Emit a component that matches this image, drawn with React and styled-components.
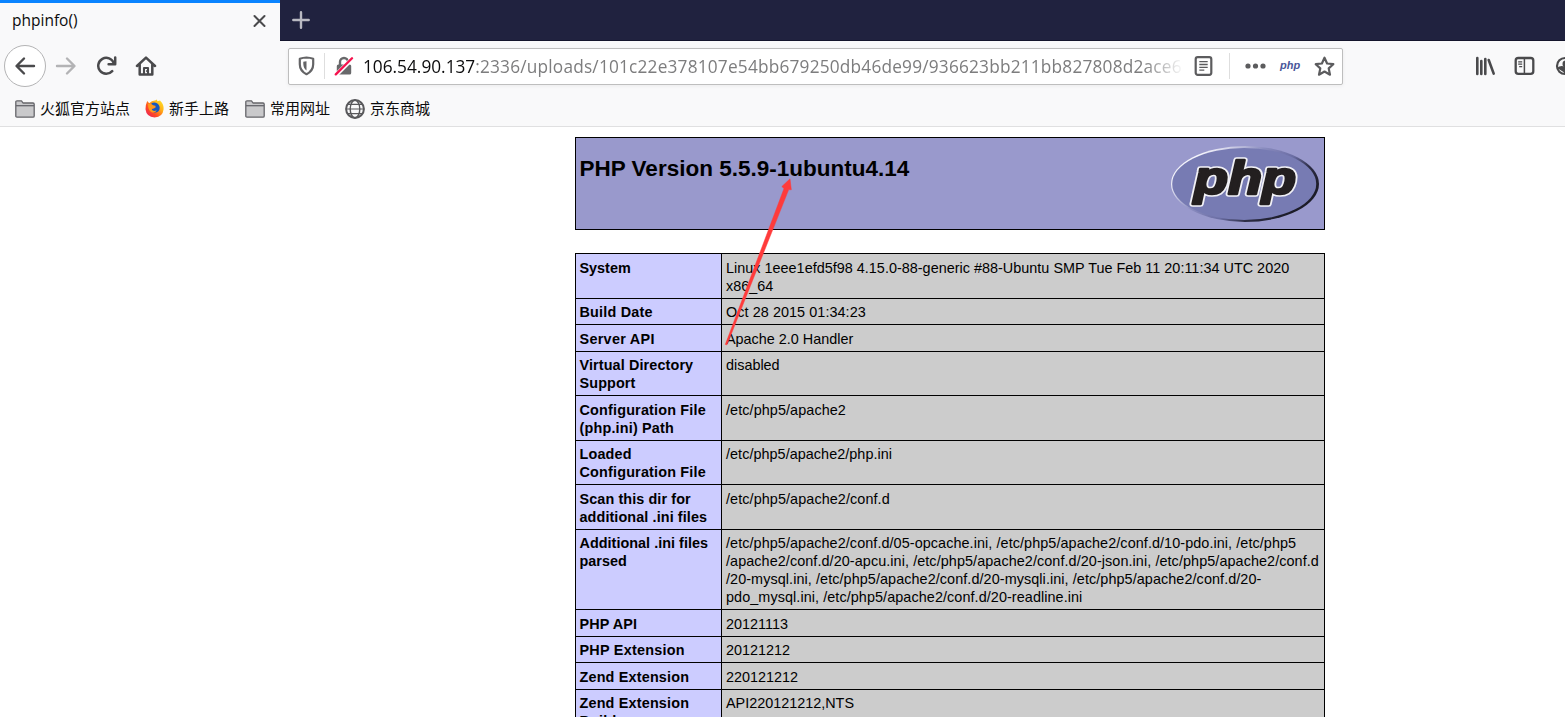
import styled, { createGlobalStyle } from 'styled-components';

const GlobalStyle = createGlobalStyle`
  * {
    box-sizing: border-box;
  }
  body {
    margin: 0;
    background: #fff;
    overflow: hidden;
  }
`;

const Window = styled.div`
  position: relative;
  width: 1565px;
  height: 717px;
  overflow: hidden;
  background: #fff;
  font-family: 'Open Sans', 'Noto Sans CJK SC', sans-serif;
`;

const TabStrip = styled.div`
  display: flex;
  height: 41px;
  background: #20223f;
  border-bottom: 1px solid #14152c;
`;

const Tab = styled.div`
  display: flex;
  align-items: center;
  justify-content: space-between;
  width: 280px;
  height: 41px;
  padding: 0 12px 3px;
  border-top: 3px solid #0a84ff;
  background: #f9f9fa;
  color: #0c0c0d;
  font-size: 15.5px;

  span {
    padding-bottom: 1px;
  }
`;

const NewTab = styled.div`
  display: flex;
  align-items: center;
  padding-left: 12px;
`;

const Toolbar = styled.div`
  display: flex;
  align-items: center;
  height: 51px;
  padding: 0 0 1px 4px;
  background: #f9f9fa;
`;

const BackButton = styled.div`
  display: flex;
  flex: none;
  align-items: center;
  justify-content: center;
  width: 42px;
  height: 42px;
  border: 1px solid #b4b4b5;
  border-radius: 50%;
  background: #fff;
`;

const ToolIcon = styled.div`
  display: flex;
  flex: none;
  margin-left: ${(p) => p.$gap}px;
`;

const UrlBar = styled.div`
  display: flex;
  flex: none;
  align-items: center;
  width: 1055px;
  height: 37px;
  margin-left: 131px;
  padding-left: 8px;
  border: 1px solid #bebebe;
  border-radius: 2px;
  background: #fff;
  box-shadow: 0 1px 4px rgba(0, 0, 0, 0.06);
`;

const Divider = styled.div`
  flex: none;
  width: 1px;
  height: 26px;
  margin-left: ${(p) => p.$gap}px;
  background: #dedede;
`;

const Address = styled.div`
  flex: none;
  width: 821px;
  margin-left: 9px;
  padding-top: 2px;
  overflow: hidden;
  color: #7d7d7e;
  font-size: 17.25px;
  line-height: 30px;
  white-space: nowrap;
  letter-spacing: 0.2px;
  mask-image: linear-gradient(to right, #000 780px, transparent 821px);

  b {
    color: #0c0c0d;
    font-weight: 400;
    letter-spacing: 0;
  }
`;

const PhpBadge = styled.span`
  margin-left: 14px;
  padding-bottom: 2px;
  color: #4a5699;
  font: italic 700 11px 'Liberation Sans', sans-serif;
`;

const Bookmarks = styled.div`
  display: flex;
  align-items: center;
  height: 35px;
  padding: 0 0 1px 15px;
  border-bottom: 1px solid #e0e0e1;
  background: #f9f9fa;
`;

const Bookmark = styled.div`
  display: flex;
  align-items: center;
  gap: 5px;
  width: ${(p) => p.$width}px;
  color: #0c0c0d;
  font: 15px/20px 'Noto Sans CJK SC', sans-serif;
  white-space: nowrap;

  svg {
    flex: none;
  }
  span {
    padding-bottom: 2px;
  }
`;

const Page = styled.main`
  width: 750px;
  margin: 10px 0 0 575px;
  color: #000;
  font-family: 'Liberation Sans', Arial, sans-serif;
`;

const Header = styled.div`
  display: flex;
  justify-content: space-between;
  height: 93px;
  padding: 7px 4px 0 3.5px;
  border: 1px solid #000;
  background: #9999cc;

  svg {
    overflow: visible;
  }
`;

const Title = styled.h1`
  margin: 10px 0 0;
  font-size: 22.5px;
  line-height: 27px;
`;

const InfoTable = styled.div`
  margin-top: 23px;
  border: 1px solid #000;
  border-bottom: 0;
`;

const Row = styled.div`
  display: grid;
  grid-template-columns: 146px 602px;
  height: ${(p) => p.$height}px;
  border-bottom: 1px solid #000;
`;

const Cell = styled.div`
  padding: ${(p) => p.$top}px 0 0 4px;
  background: #cccccc;
  font-size: 14.4px;
  line-height: 18px;
  letter-spacing: ${(p) => p.$tracking}px;
  white-space: pre;
`;

const Label = styled(Cell)`
  padding-left: 3.5px;
  border-right: 1px solid #000;
  background: #ccccff;
  font-weight: 700;
`;

const Pointer = styled.svg`
  position: absolute;
  left: 720px;
  top: 175px;
`;

// row height, label, value, label tracking, value tracking
const rows = [
  [45, 'System', 'Linux 1eee1efd5f98 4.15.0-88-generic #88-Ubuntu SMP Tue Feb 11 20:11:34 UTC 2020\nx86_64', 0, 0.02],
  [26, 'Build Date', 'Oct 28 2015 01:34:23', 0.2, 0.07],
  [27, 'Server API', 'Apache 2.0 Handler', 0.3, 0],
  [44, 'Virtual Directory\nSupport', 'disabled', 0.12, 0],
  [45, 'Configuration File\n(php.ini) Path', '/etc/php5/apache2', 0.18, 0.09],
  [44, 'Loaded\nConfiguration File', '/etc/php5/apache2/php.ini', 0.18, 0.05],
  [45, 'Scan this dir for\nadditional .ini files', '/etc/php5/apache2/conf.d', 0.1, 0.09],
  [
    80,
    'Additional .ini files\nparsed',
    '/etc/php5/apache2/conf.d/05-opcache.ini, /etc/php5/apache2/conf.d/10-pdo.ini, /etc/php5\n/apache2/conf.d/20-apcu.ini, /etc/php5/apache2/conf.d/20-json.ini, /etc/php5/apache2/conf.d\n/20-mysql.ini, /etc/php5/apache2/conf.d/20-mysqli.ini, /etc/php5/apache2/conf.d/20-\npdo_mysql.ini, /etc/php5/apache2/conf.d/20-readline.ini',
    0.03,
    0.08,
  ],
  [27, 'PHP API', '20121113', 0.1, 0],
  [26, 'PHP Extension', '20121212', 0.25, 0],
  [27, 'Zend Extension', '220121212', 0.18, 0],
  [44, 'Zend Extension\nBuild', 'API220121212,NTS', 0.18, 0],
];

const Arrow = ({ color, flip }) => (
  <svg width="22" height="20" viewBox="0 0 22 20" fill="none" stroke={color} strokeWidth="2.4" strokeLinecap="round" strokeLinejoin="round">
    <path d={flip ? 'M2 10h17M12 2.5l7.5 7.5-7.5 7.5' : 'M20 10H3M10 2.5L2.5 10l7.5 7.5'} />
  </svg>
);

const FolderIcon = () => (
  <svg width="20" height="18" viewBox="0 0 20 18" stroke="#65656a" strokeWidth="1.3" strokeLinejoin="round">
    <path d="M.8 16V2q0-1.2 1.2-1.2h4.5L8 3h10q1.2 0 1.2 1.2V16q0 1.2-1.2 1.2H2Q.8 17.2.8 16z" fill="#c9c9cb" />
    <path d="M1 5.7h18" />
  </svg>
);

const FirefoxIcon = () => (
  <svg width="19" height="19" viewBox="0 0 19 19">
    <defs>
      <linearGradient id="fox" x1="1" y1="0" x2="0" y2="1">
        <stop offset="0" stopColor="#fff12e" />
        <stop offset="0.35" stopColor="#ffae16" />
        <stop offset="0.65" stopColor="#ff4b24" />
        <stop offset="1" stopColor="#e5156d" />
      </linearGradient>
    </defs>
    <path d="M2.2 2l2 2.2Q7 1.2 10 1.4L12 .5l.3 1.8L15 1.5q4 4 3.6 8.8Q17.8 18 9.6 18.6 1.4 18 .5 10.3.2 6.5 2.2 2z" fill="url(#fox)" />
    <path d="M6.3 4.4Q9 2.6 12 4.2q3.4 2.3 2.5 6-1.2 3.4-4.8 3.2Q6.3 13 6 10l3-.6L11 8 7 7z" fill="#1557bd" />
    <path d="M3 5q3-1 5.2 1.2L11 7 8.8 8.9 6.7 10q1 3 5.2 1.2-2.2 3.5-5.8 1.8Q3 11.3 3 5z" fill="#ff9a1b" />
  </svg>
);

const GlobeIcon = () => (
  <svg width="20" height="20" viewBox="0 0 20 20" fill="none" stroke="#58585b" strokeWidth="1.4">
    <circle cx="10" cy="10" r="8.9" strokeWidth="2" />
    <ellipse cx="10" cy="10" rx="4.8" ry="8.7" />
    <path d="M1.5 10h17M3 5.3h14M3 14.7h14" strokeWidth="1.2" />
  </svg>
);

const PhpLogo = () => (
  <svg width="150" height="80" viewBox="0 0 150 80">
    <defs>
      <linearGradient id="rim" gradientUnits="userSpaceOnUse" x1="42" y1="0" x2="108" y2="78">
        <stop offset="0" stopColor="#f4f4fb" />
        <stop offset="0.12" stopColor="#d5d5ea" />
        <stop offset="0.35" stopColor="#8a8cbf" />
        <stop offset="0.6" stopColor="#6a6da3" />
        <stop offset="0.78" stopColor="#2c2c44" />
        <stop offset="1" stopColor="#1c1c28" />
      </linearGradient>
    </defs>
    <ellipse cx="75" cy="39" rx="74" ry="38" fill="url(#rim)" />
    <ellipse cx="74.2" cy="38.9" rx="72" ry="36" fill="#777bb3" />
    <g fontFamily="Liberation Sans" fontWeight="700" fontStyle="italic" fontSize="47" strokeLinejoin="round">
      <text x="24" y="49.3" textLength="102" lengthAdjust="spacingAndGlyphs" fill="#f1f1f6" stroke="#f1f1f6" strokeWidth="5.6">php</text>
      <text x="24" y="49.3" textLength="102" lengthAdjust="spacingAndGlyphs" fill="#231f20" stroke="#231f20" strokeWidth="2.6">php</text>
    </g>
  </svg>
);

export default function App() {
  return (
    <Window>
      <GlobalStyle />

      {/* Tabs */}
      <TabStrip>
        <Tab>
          <span>phpinfo()</span>
          <svg width="17" height="17" viewBox="0 0 17 17" stroke="#4a4a4c" strokeWidth="2" strokeLinecap="round">
            <path d="M3.5 4l10 10M13.5 4l-10 10" />
          </svg>
        </Tab>
        <NewTab>
          <svg width="18" height="18" viewBox="0 0 18 18" stroke="#b9b9c2" strokeWidth="2.4" strokeLinecap="round">
            <path d="M9 1.3v15.4M1.3 9h15.4" />
          </svg>
        </NewTab>
      </TabStrip>

      {/* Navigation */}
      <Toolbar>
        <BackButton><Arrow color="#4a4a4c" /></BackButton>
        <ToolIcon $gap={9}><Arrow color="#b3b3b5" flip /></ToolIcon>
        <ToolIcon $gap={19}>
          <svg width="21" height="20" viewBox="0 0 21 20" fill="none" stroke="#4a4a4c" strokeWidth="2.5" strokeLinecap="round" strokeLinejoin="round">
            <path d="M16.2 15.2A8 8 0 1 1 17.8 7.2" />
            <path d="M19.2 1.6v6.6h-6.6" />
          </svg>
        </ToolIcon>
        <ToolIcon $gap={18}>
          <svg width="22" height="20" viewBox="0 0 22 20" fill="none" stroke="#4a4a4c" strokeWidth="2.5" strokeLinecap="round" strokeLinejoin="round">
            <path d="M2 10L11 1.6 20 10M4.7 8.6V18.4h12.6V8.6" />
            <path d="M9 18v-6h4v6" strokeWidth="2.1" />
            <path d="M11.8 14.5v1" strokeWidth="1.2" />
          </svg>
        </ToolIcon>

        <UrlBar>
          <svg width="19" height="20" viewBox="0 0 19 20" fill="none" stroke="#646466" strokeWidth="2.2" strokeLinejoin="round">
            <path d="M9.5 1.5Q13 1.6 16.2 2.8v5.4q0 6.6-6.7 10Q2.8 14.8 2.8 8.2V2.8Q6 1.6 9.5 1.5z" />
            <path d="M9.5 5.2v9.2Q6.4 12.3 6.3 8V5.7q1.4-.4 3.2-.5z" fill="#646466" stroke="none" />
          </svg>
          <Divider $gap={8} />
          <ToolIcon $gap={9}>
            <svg width="20" height="20" viewBox="0 0 20 20">
              <path d="M6 9V6a4 4 0 0 1 8 0v3" fill="none" stroke="#68686a" strokeWidth="2.4" />
              <rect x="2.8" y="8.5" width="14.4" height="10" rx="1.6" fill="#68686a" />
              <path d="M2 19L19 2" stroke="#fff" strokeWidth="4.2" />
              <path d="M1.8 18.4L18 2.2" stroke="#f5134e" strokeWidth="2.3" strokeLinecap="round" />
            </svg>
          </ToolIcon>
          <Address>
            <b>106.54.90.137</b>:2336/uploads/101c22e378107e54bb679250db46de99/936623bb211bb827808d2ace6
          </Address>
          <ToolIcon $gap={10}>
            <svg width="19" height="21" viewBox="0 0 19 21" fill="none" stroke="#5c5c5e">
              <rect x="1.7" y="1.2" width="15.6" height="17.6" rx="2" strokeWidth="2.2" />
              <path d="M5.3 5.7h8.4M5.3 8.5h8.4M5.3 11.3h8.4M5.3 14.1h5" strokeWidth="1.3" />
            </svg>
          </ToolIcon>
          <Divider $gap={16} />
          <ToolIcon $gap={15}>
            <svg width="21" height="6" viewBox="0 0 21 6" fill="#5c5c5e">
              <circle cx="3" cy="3" r="2.6" />
              <circle cx="10.5" cy="3" r="2.6" />
              <circle cx="18" cy="3" r="2.6" />
            </svg>
          </ToolIcon>
          <PhpBadge>php</PhpBadge>
          <ToolIcon $gap={14}>
            <svg width="21" height="21" viewBox="0 0 21 21" fill="none" stroke="#5c5c5e" strokeWidth="2.2" strokeLinejoin="round">
              <path d="M10.5 1.7l2.6 5.8 6.2.7-4.6 4.2 1.3 6.3-5.5-3.2L5 18.7l1.3-6.3-4.6-4.2 6.2-.7z" />
            </svg>
          </ToolIcon>
        </UrlBar>

        <ToolIcon $gap={132}>
          <svg width="21" height="20" viewBox="0 0 21 20" stroke="#4a4a4c" strokeWidth="2.6" strokeLinecap="round">
            <path d="M2.3 2v16M6.3 5v13M10.3 3v15M13.7 4l5 13.6" />
          </svg>
        </ToolIcon>
        <ToolIcon $gap={18}>
          <svg width="21" height="20" viewBox="0 0 21 20" fill="none" stroke="#4a4a4c">
            <rect x="1.7" y="2" width="17.6" height="15.8" rx="2.6" strokeWidth="2.3" />
            <path d="M10.4 2v16" strokeWidth="1.5" />
            <path d="M4.2 5.8h4M4.2 8.2h4M5.2 10.6h3" strokeWidth="1.2" />
          </svg>
        </ToolIcon>
        <ToolIcon $gap={20}>
          <svg width="20" height="20" viewBox="0 0 20 20" fill="none" stroke="#4a4a4c" strokeWidth="2.2">
            <circle cx="10" cy="10" r="8" />
            <path d="M3 12.5q3-2.5 7-.5v5" fill="#4a4a4c" />
            <circle cx="11" cy="8" r="3.5" fill="#4a4a4c" stroke="none" />
          </svg>
        </ToolIcon>
      </Toolbar>

      {/* Bookmarks */}
      <Bookmarks>
        <Bookmark $width={130}><FolderIcon /><span>火狐官方站点</span></Bookmark>
        <Bookmark $width={100}><FirefoxIcon /><span>新手上路</span></Bookmark>
        <Bookmark $width={100}><FolderIcon /><span>常用网址</span></Bookmark>
        <Bookmark $width={100}><GlobeIcon /><span>京东商城</span></Bookmark>
      </Bookmarks>

      {/* phpinfo page */}
      <Page>
        <Header>
          <Title>PHP Version 5.5.9-1ubuntu4.14</Title>
          <PhpLogo />
        </Header>
        <InfoTable>
          {rows.map(([height, label, value, labelTracking, tracking]) => {
            // the shorter rows sit half a pixel higher and round up
            const top = height === 26 || height === 44 || height === 80 ? 4 : 5;
            return (
              <Row key={label} $height={height}>
                <Label $top={top} $tracking={labelTracking}>{label}</Label>
                <Cell $top={top} $tracking={tracking}>{value}</Cell>
              </Row>
            );
          })}
        </InfoTable>
      </Page>

      <Pointer width="80" height="175" viewBox="0 0 80 175">
        <path d="M5.3 169.5L64 13.6l-2.2-2L70 3.8l1.3 11-2.6-.2L7 169.8z" fill="#ff3b3b" stroke="#ff3b3b" strokeWidth="0.5" />
      </Pointer>
    </Window>
  );
}
